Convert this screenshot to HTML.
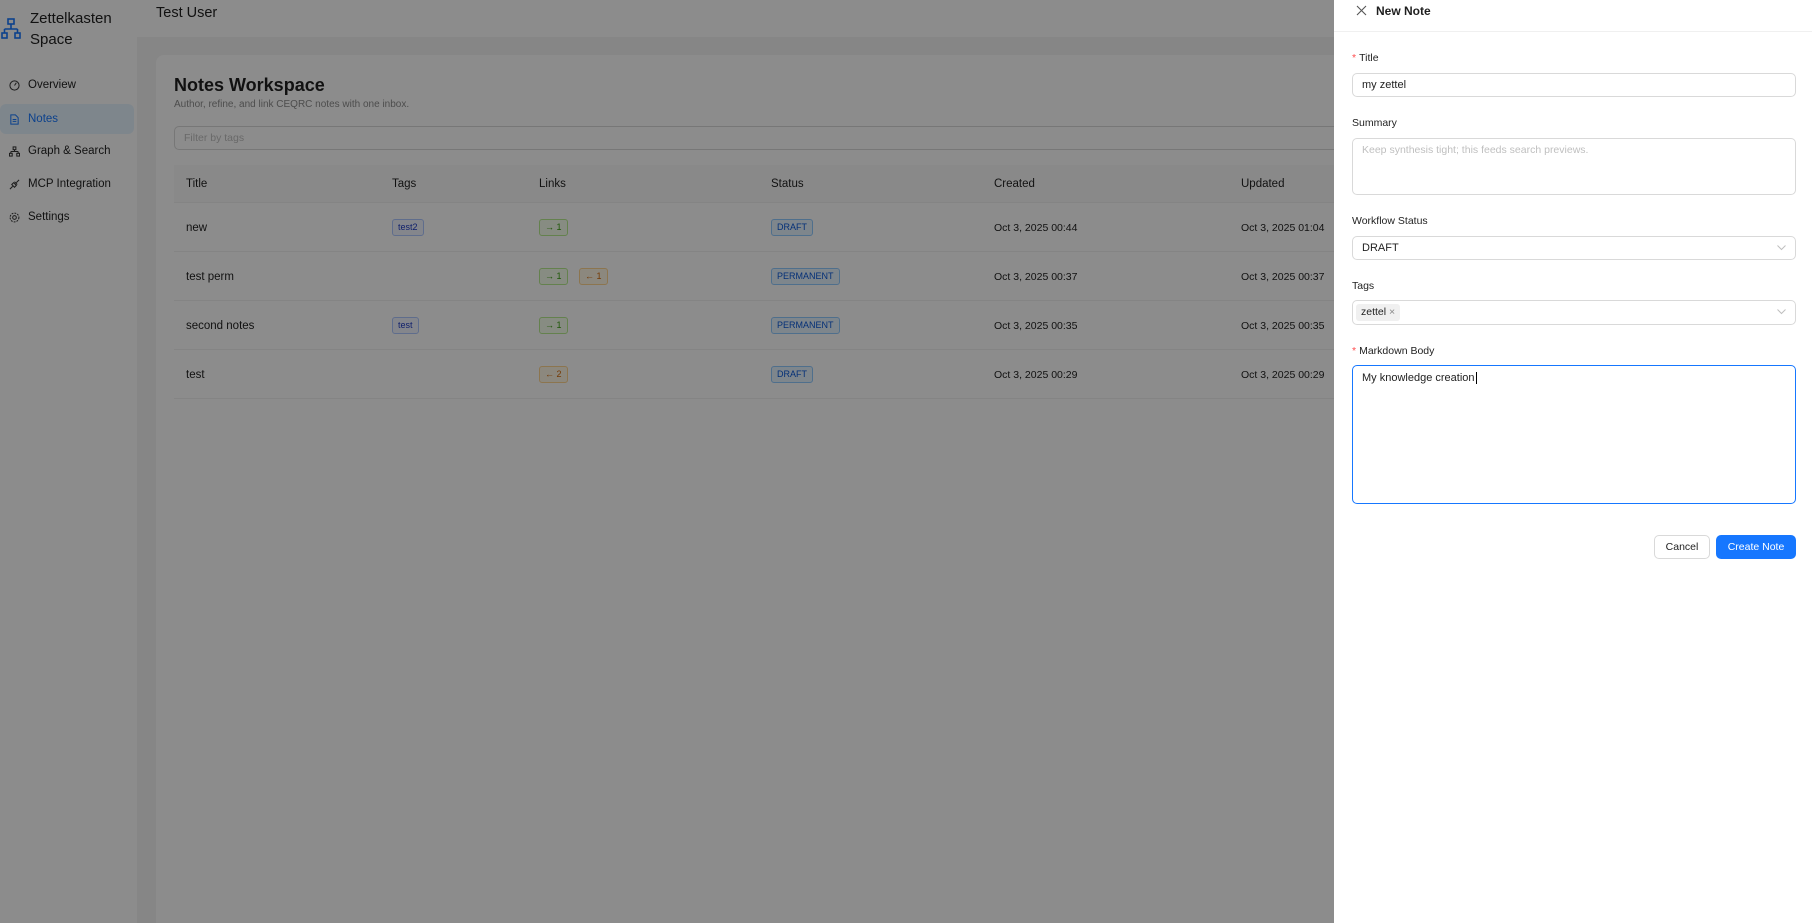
<!DOCTYPE html>
<html style="overflow:hidden;width:1812px;height:923px"><head><meta charset="utf-8"><style>
*{box-sizing:border-box;margin:0;padding:0}
body{width:1812px;height:923px;overflow:hidden;position:relative;font-family:"Liberation Sans",sans-serif;color:#1f1f1f;background:#f5f5f5;font-size:12px}
.abs{position:absolute}
.side{left:0;top:0;width:137px;height:923px;background:#fff}
.mi{position:absolute;left:0;width:134px;height:30px;display:flex;align-items:center;padding-left:9px;font-size:11.5px;color:#1f1f1f}
.mi svg{margin-right:8px}
.mi.sel{background:#e6f4ff;color:#1677ff;border-radius:6px}
.hdr{left:137px;top:0;width:1200px;height:37px;background:#fff}
.card{left:156px;top:55px;width:1300px;height:868px;background:#fff;border-radius:8px 8px 0 0}
.th{position:absolute;top:165px;height:38px;left:174px;width:1200px;background:#fafafa;border-bottom:1px solid #f0f0f0}
.row{position:absolute;left:174px;width:1200px;height:49px;border-bottom:1px solid #f0f0f0}
.c{position:absolute;font-size:11.5px;line-height:14px}
.tag{position:absolute;font-size:9px;padding:1px 5px;border-radius:3px;border:1px solid;line-height:13px}
.blue{color:#0958d9;background:#e6f4ff;border-color:#91caff}
.tb{color:#1d39c4;background:#f0f5ff;border-color:#adc6ff}
.green{color:#389e0d;background:#f6ffed;border-color:#b7eb8f}
.org{color:#d46b08;background:#fff7e6;border-color:#ffd591}
.mask{left:0;top:0;width:1334px;height:923px;background:rgba(0,0,0,0.45)}
.drawer{left:1334px;top:0;width:478px;height:923px;background:#fff}
.lbl{position:absolute;left:18px;font-size:10.5px;color:#1f1f1f}
.lbl .r{color:#ff4d4f;margin-right:3px}
.inp{position:absolute;left:18px;width:444px;border:1px solid #d9d9d9;border-radius:5px;background:#fff;font-size:11px;padding-left:9px}
.chev{position:absolute;right:9px;top:8px}
</style></head><body>
<div class="abs side">
  <svg class="abs" style="left:1px;top:18px" width="20" height="22" viewBox="0 0 20 22" fill="none" stroke="#1677ff" stroke-width="1.6"><rect x="7" y="1" width="6" height="5"/><path d="M10 6v5M3.5 11h13M3.5 11v4M16.5 11v4"/><rect x="1" y="15" width="5" height="5"/><rect x="14" y="15" width="5" height="5"/></svg>
  <div class="abs" style="left:30px;top:8px;font-size:15px;line-height:21px;font-weight:500;color:#1f1f1f">Zettelkasten<br>Space</div>
  <div class="mi" style="top:70px"><svg width="11" height="11" viewBox="0 0 12 12" fill="none" stroke="#333" stroke-width="1.1"><circle cx="6" cy="6" r="5"/><path d="M6 6l2-3"/></svg>Overview</div>
  <div class="mi sel" style="top:104px"><svg width="11" height="11" viewBox="0 0 12 12" fill="none" stroke="#1677ff" stroke-width="1.1"><path d="M2 1h5l3 3v7H2z"/><path d="M4 6h4M4 8h4"/></svg>Notes</div>
  <div class="mi" style="top:136px"><svg width="11" height="11" viewBox="0 0 12 12" fill="none" stroke="#333" stroke-width="1.1"><rect x="4.5" y="1" width="3" height="3"/><path d="M6 4v2M2 6h8M2 6v2M10 6v2"/><rect x="0.5" y="8" width="3" height="3"/><rect x="8.5" y="8" width="3" height="3"/></svg>Graph &amp; Search</div>
  <div class="mi" style="top:169px"><svg width="11" height="11" viewBox="0 0 12 12" fill="none" stroke="#333" stroke-width="1.1"><path d="M1 11l3-3M8 4l3-3M3 6l3 3 2-2-3-3zM6 3l3 3"/></svg>MCP Integration</div>
  <div class="mi" style="top:202px"><svg width="11" height="11" viewBox="0 0 12 12" fill="none" stroke="#333" stroke-width="1.1"><circle cx="6" cy="6" r="2"/><circle cx="6" cy="6" r="4.8" stroke-dasharray="2 1.2"/></svg>Settings</div>
</div>
<div class="abs hdr"><div class="abs" style="left:19px;top:5px;font-size:14.5px;font-weight:500">Test User</div></div>
<div class="abs card"></div>
<div class="abs" style="left:174px;top:75px;font-size:18px;font-weight:700">Notes Workspace</div>
<div class="abs" style="left:174px;top:99px;font-size:10px;color:#8c8c8c">Author, refine, and link CEQRC notes with one inbox.</div>
<div class="abs" style="left:174px;top:126px;width:1200px;height:24px;border:1px solid #d9d9d9;border-radius:5px;background:#fff;font-size:10.5px;color:#bfbfbf;padding:5px 9px">Filter by tags</div>
<div class="th">
  <div class="c" style="left:12px;top:12px;font-weight:500">Title</div>
  <div class="c" style="left:218px;top:12px;font-weight:500">Tags</div>
  <div class="c" style="left:365px;top:12px;font-weight:500">Links</div>
  <div class="c" style="left:597px;top:12px;font-weight:500">Status</div>
  <div class="c" style="left:820px;top:12px;font-weight:500">Created</div>
  <div class="c" style="left:1067px;top:12px;font-weight:500">Updated</div>
</div>
<div class="row" style="top:203px">
  <div class="c" style="left:12px;top:18px">new</div>
  <span class="tag tb" style="left:218px;top:16px">test2</span>
  <span class="tag green" style="left:365px;top:16px">→ 1</span>
  <span class="tag blue" style="left:597px;top:16px">DRAFT</span>
  <div class="c" style="left:820px;top:18px;font-size:10.5px">Oct 3, 2025 00:44</div>
  <div class="c" style="left:1067px;top:18px;font-size:10.5px">Oct 3, 2025 01:04</div>
</div>
<div class="row" style="top:252px">
  <div class="c" style="left:12px;top:18px">test perm</div>
  <span class="tag green" style="left:365px;top:16px">→ 1</span>
  <span class="tag org" style="left:405px;top:16px">← 1</span>
  <span class="tag blue" style="left:597px;top:16px">PERMANENT</span>
  <div class="c" style="left:820px;top:18px;font-size:10.5px">Oct 3, 2025 00:37</div>
  <div class="c" style="left:1067px;top:18px;font-size:10.5px">Oct 3, 2025 00:37</div>
</div>
<div class="row" style="top:301px">
  <div class="c" style="left:12px;top:18px">second notes</div>
  <span class="tag tb" style="left:218px;top:16px">test</span>
  <span class="tag green" style="left:365px;top:16px">→ 1</span>
  <span class="tag blue" style="left:597px;top:16px">PERMANENT</span>
  <div class="c" style="left:820px;top:18px;font-size:10.5px">Oct 3, 2025 00:35</div>
  <div class="c" style="left:1067px;top:18px;font-size:10.5px">Oct 3, 2025 00:35</div>
</div>
<div class="row" style="top:350px">
  <div class="c" style="left:12px;top:18px">test</div>
  <span class="tag org" style="left:365px;top:16px">← 2</span>
  <span class="tag blue" style="left:597px;top:16px">DRAFT</span>
  <div class="c" style="left:820px;top:18px;font-size:10.5px">Oct 3, 2025 00:29</div>
  <div class="c" style="left:1067px;top:18px;font-size:10.5px">Oct 3, 2025 00:29</div>
</div>
<div class="abs mask"></div>
<div class="abs drawer">
  <svg class="abs" style="left:22px;top:5px" width="11" height="11" viewBox="0 0 11 11" stroke="#555" stroke-width="1.1"><path d="M1 1l9 9M10 1l-9 9"/></svg>
  <div class="abs" style="left:42px;top:4px;font-size:12px;font-weight:700">New Note</div>
  <div class="abs" style="left:0;top:31px;width:478px;height:1px;background:#f0f0f0"></div>
  <div class="lbl" style="top:52px"><span class="r">*</span>Title</div>
  <div class="inp" style="top:73px;height:24px;line-height:22px">my zettel</div>
  <div class="lbl" style="top:117px">Summary</div>
  <div class="inp" style="top:138px;height:57px;padding-top:5px;color:#bfbfbf;font-size:10.5px">Keep synthesis tight; this feeds search previews.</div>
  <div class="lbl" style="top:215px">Workflow Status</div>
  <div class="inp" style="top:236px;height:24px;line-height:22px">DRAFT<svg class="chev" width="9" height="6" viewBox="0 0 9 6" fill="none" stroke="#bfbfbf"><path d="M.5.5l4 4 4-4"/></svg></div>
  <div class="lbl" style="top:280px">Tags</div>
  <div class="inp" style="top:300px;height:25px;padding-left:3px"><span style="display:inline-block;margin-top:3px;background:#f0f0f0;border-radius:3px;padding:2px 5px;font-size:10.5px;line-height:13px">zettel <span style="color:#888">×</span></span><svg class="chev" width="9" height="6" viewBox="0 0 9 6" fill="none" stroke="#bfbfbf"><path d="M.5.5l4 4 4-4"/></svg></div>
  <div class="lbl" style="top:345px"><span class="r">*</span>Markdown Body</div>
  <div class="inp" style="top:365px;height:139px;border-color:#1677ff;padding-top:6px">My knowledge creation<span style="border-left:1px solid #000;margin-left:1px"></span></div>
  <div class="abs" style="left:320px;top:535px;width:56px;height:24px;border:1px solid #d9d9d9;border-radius:5px;font-size:10.5px;text-align:center;line-height:22px">Cancel</div>
  <div class="abs" style="left:382px;top:535px;width:80px;height:24px;background:#1677ff;color:#fff;border-radius:5px;font-size:10.5px;text-align:center;line-height:24px">Create Note</div>
</div>
</body></html>
